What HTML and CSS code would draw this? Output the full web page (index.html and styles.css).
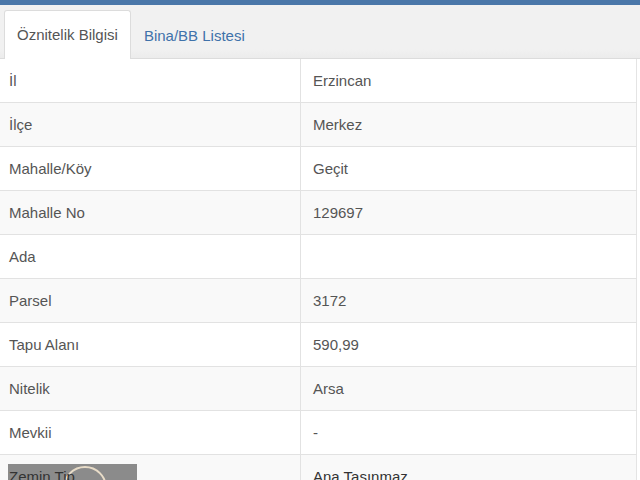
FILE: index.html
```html
<!DOCTYPE html>
<html>
<head>
    <title>Taşınmaz Bilgisi</title>
    <link rel="stylesheet" href="styles.css">
</head>
<body>
    <div class="topbar"></div>
    <div class="tabs">
        <a class="tab active">Öznitelik Bilgisi</a>
        <a class="tab">Bina/BB Listesi</a>
    </div>

    <table class="attrs">
        <tbody>
            <tr><td>İl</td><td>Erzincan</td></tr>
            <tr><td>İlçe</td><td>Merkez</td></tr>
            <tr><td>Mahalle/Köy</td><td>Geçit</td></tr>
            <tr><td>Mahalle No</td><td>129697</td></tr>
            <tr><td>Ada</td><td></td></tr>
            <tr><td>Parsel</td><td>3172</td></tr>
            <tr><td>Tapu Alanı</td><td>590,99</td></tr>
            <tr><td>Nitelik</td><td>Arsa</td></tr>
            <tr><td>Mevkii</td><td>-</td></tr>
            <tr><td><span class="over">Zemin Tip</span></td><td>Ana Taşınmaz</td></tr>
        </tbody>
    </table>

    <!-- player control left over the last row -->
    <div class="overlay">
        <span class="ring"></span>
    </div>
</body>
</html>
```

FILE: styles.css
```css
body {
    font-family: "Liberation Sans", Arial, sans-serif;
    font-size: 15px;
    color: #555;
    margin: 0;
    background: #fff;
    overflow: hidden;
}
.topbar {
    height: 5px;
    background-color: #4a77a9;
}
.tabs {
    display: flex;
    align-items: flex-end;
    height: 54px;
    padding-left: 4px;
    background: linear-gradient(#f1f1f1 0, #f1f1f1 44px, #ebebeb 54px);
    border-bottom: 1px solid #dcdcdc;
    box-sizing: border-box;
}
.tab {
    display: block;
    height: 47px;
    line-height: 47px;
    padding: 0 12px;
    margin-bottom: -1px;
    color: #3f72aa;
    border: 1px solid transparent;
    border-bottom: none;
    border-radius: 3px 3px 0 0;
}
.tab.active {
    color: #555;
    background-color: #fff;
    border-color: #dcdcdc;
    height: 48px;
}
.attrs {
    width: 637px;
    border-collapse: collapse;
    border-right: 1px solid #e4e4e4;
}
.attrs td {
    height: 21px;
    line-height: 21px;
    padding: 11px 9px;
    border-top: 1px solid #e2e2e2;
    vertical-align: middle;
}
.attrs tr:first-child td {
    border-top: none;
}
.attrs td:first-child {
    width: 282px;
}
.attrs td + td {
    padding-left: 12px;
    border-left: 1px solid #e2e2e2;
}
.attrs tr:nth-child(even) td {
    background-color: #f9f9f9;
}
.attrs tr:last-child td {
    color: #333;
}
.over {
    position: relative;
    z-index: 2;
}
.overlay {
    position: absolute;
    z-index: 1;
    left: 8px;
    top: 464px;
    width: 129px;
    height: 20px;
    background-color: rgba(120, 120, 120, 0.85);
    overflow: hidden;
}
.ring {
    position: absolute;
    left: 55px;
    top: 2px;
    width: 40px;
    height: 40px;
    border: 2px solid #e8dcc8;
    border-radius: 50%;
}
```
